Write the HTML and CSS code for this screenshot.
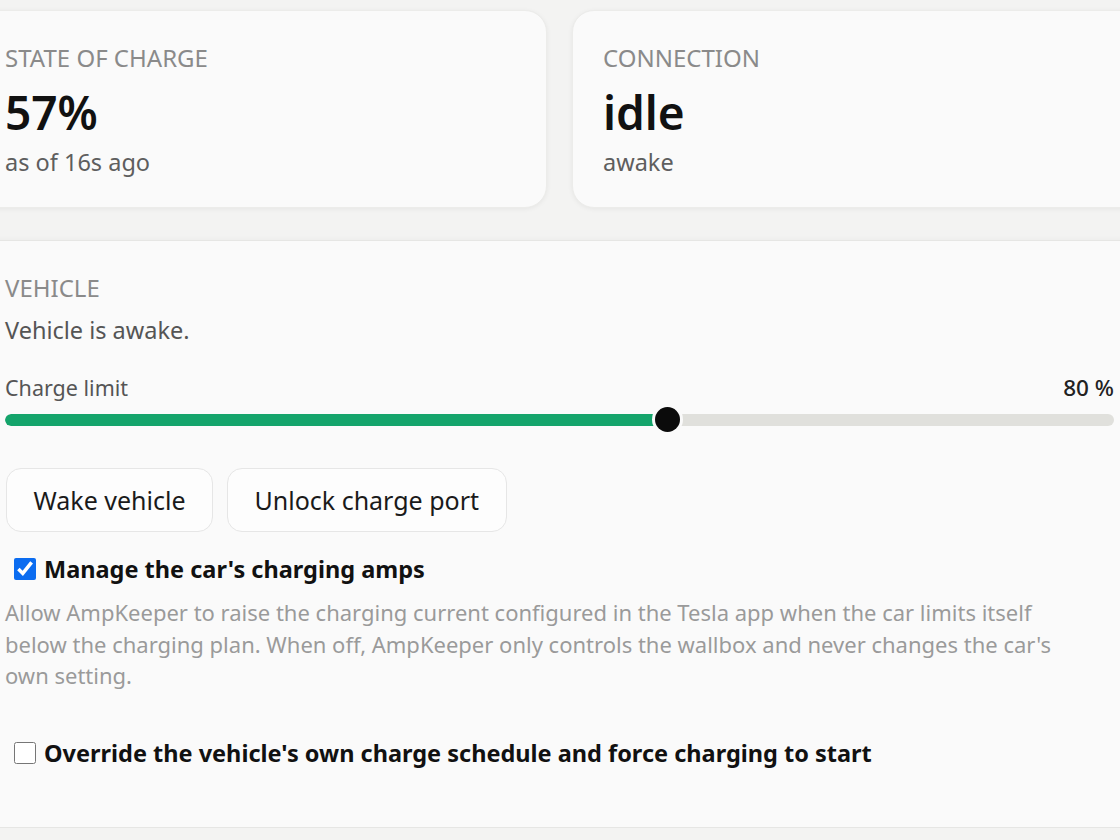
FILE: index.html
```html
<!DOCTYPE html>
<html lang="en">
<head>
<meta charset="utf-8">
<title>AmpKeeper</title>
<link rel="stylesheet" href="styles.css">
</head>
<body>
<div class="page">
  <div class="stats">
    <div class="card">
      <div class="label">State of charge</div>
      <div class="value">57%</div>
      <div class="sub">as of 16s ago</div>
    </div>
    <div class="card">
      <div class="label">Connection</div>
      <div class="value">idle</div>
      <div class="sub">awake</div>
    </div>
  </div>

  <section class="panel">
    <div class="label">Vehicle</div>
    <p class="status">Vehicle is awake.</p>
    <div class="limit-row">
      <span class="limit-label">Charge limit</span>
      <span class="limit-value">80 %</span>
    </div>
    <div class="slider" style="--p:0.6">
      <div class="track">
        <div class="fill"></div>
      </div>
      <div class="thumb"></div>
    </div>
    <div class="actions">
      <button class="btn" type="button">Wake vehicle</button>
      <button class="btn" type="button">Unlock charge port</button>
    </div>
    <label class="check">
      <input type="checkbox" checked>
      <span>Manage the car's charging amps</span>
    </label>
    <p class="hint">Allow AmpKeeper to raise the charging current configured in the Tesla app when the car limits itself below the charging plan. When off, AmpKeeper only controls the wallbox and never changes the car's own setting.</p>
    <label class="check check-override">
      <input type="checkbox">
      <span>Override the vehicle's own charge schedule and force charging to start</span>
    </label>
  </section>
</div>
</body>
</html>
```

FILE: styles.css
```css
html, body {
  margin: 0;
  padding: 0;
  overflow: hidden;
}

body {
  background: #f3f3f2;
  font-family: "Noto Sans", "Open Sans", "Liberation Sans", sans-serif;
  color: #111;
}

.page {
  width: 1171px;
  margin: 0 0 0 -26px;
  padding-top: 10px;
}

.stats {
  display: grid;
  grid-template-columns: 1fr 1fr;
  gap: 25px;
}

.card {
  background: #fafafa;
  border: 1px solid #ececea;
  border-radius: 22px;
  box-shadow: 0 1px 5px rgba(0, 0, 0, 0.06);
  padding: 30px 30px 28px;
}

.label {
  font-size: 24px;
  line-height: 33px;
  text-transform: uppercase;
  color: #8a8a8a;
}

.value {
  font-size: 46px;
  line-height: 55px;
  font-weight: 600;
  color: #111;
  margin-top: 10.5px;
}

.sub {
  font-size: 23.5px;
  line-height: 33px;
  color: #5e5e5e;
  margin-top: 6.5px;
}

.panel {
  margin-top: 32px;
  background: #fafafa;
  border: 1px solid #e6e6e4;
  box-shadow: 0 2px 8px rgba(0, 0, 0, 0.06);
  padding: 30px 30px 57px;
}

.status {
  margin: 10px 0 0;
  font-size: 23.5px;
  line-height: 33px;
  color: #555;
}

.limit-row {
  margin-top: 24px;
  display: flex;
  justify-content: space-between;
  align-items: baseline;
  line-height: 33px;
}

.limit-label {
  font-size: 21.5px;
  color: #555;
}

.limit-value {
  font-size: 22.5px;
  font-weight: 500;
  color: #222;
}

.slider {
  position: relative;
  height: 25px;
  margin-top: 3px;
  display: flex;
  align-items: center;
}

.track {
  flex: 1;
  height: 12px;
  border-radius: 6px;
  background: #e0e0dc;
  overflow: hidden;
}

.fill {
  height: 100%;
  width: calc(12.5px + var(--p) * (100% - 25px));
  background: #14a46b;
  border-radius: 6px 0 0 6px;
}

.thumb {
  position: absolute;
  top: 0;
  left: calc(var(--p) * (100% - 25px));
  width: 25px;
  height: 25px;
  border-radius: 50%;
  background: #0b0b0b;
  box-shadow: 0 0 0 3px #fafafa;
}

.actions {
  margin-top: 36px;
  padding-left: 1px;
  display: flex;
  gap: 14px;
}

.btn {
  font-family: inherit;
  font-size: 25px;
  line-height: 30px;
  color: #1a1a1a;
  background: #fdfdfd;
  border: 1px solid #e6e6e6;
  border-radius: 15px;
  padding: 16px 26.5px;
  margin: 0;
}

.check {
  display: flex;
  align-items: center;
  margin-top: 20px;
  font-size: 23.5px;
  line-height: 34px;
  font-weight: 700;
  color: #111;
}

.check input {
  flex: none;
  width: 22px;
  height: 22px;
  margin: 0 8px 0 9px;
  accent-color: #0b6cf0;
}

.hint {
  max-width: 1080px;
  margin: 11px 0 0;
  font-size: 22px;
  line-height: 31.7px;
  color: #9a9a9a;
}

.check-override {
  margin-top: 44px;
}
```
